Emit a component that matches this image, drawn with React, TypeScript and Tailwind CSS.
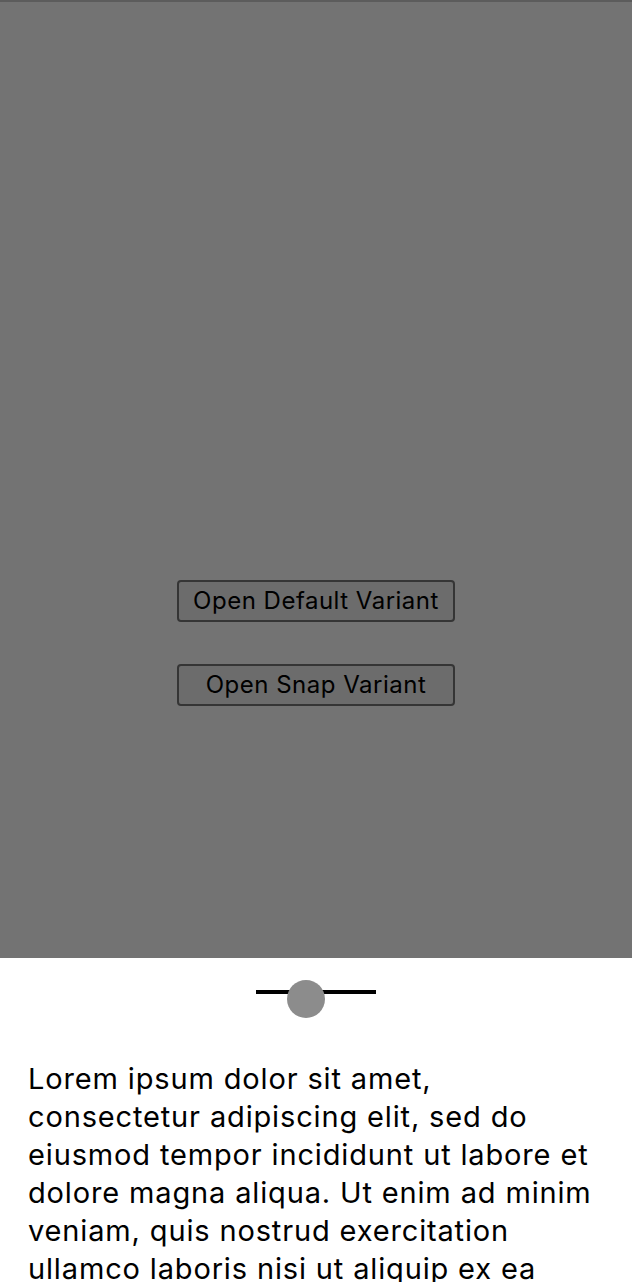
import React from "react";

const LINES = [
  "Lorem ipsum dolor sit amet,",
  "consectetur adipiscing elit, sed do",
  "eiusmod tempor incididunt ut labore et",
  "dolore magna aliqua. Ut enim ad minim",
  "veniam, quis nostrud exercitation",
  "ullamco laboris nisi ut aliquip ex ea",
  "commodo consequat. Duis aute irure",
  "dolor in reprehenderit in voluptate",
  "velit esse cillum dolore eu fugiat",
  "nulla pariatur.",
];

export default function App() {
  return (
    <div
      className="relative w-[632px] h-[1282px] overflow-hidden bg-white"
      style={{ fontFamily: 'Inter, "Liberation Sans", Arial, sans-serif' }}
    >
      <div className="flex h-full flex-col items-center justify-center gap-[42px] pt-[4px]">
        <button className="w-[278px] h-[42px] rounded-[4px] border-2 border-[#767676] bg-[#efefef] text-[24px] tracking-[0.5px] text-black">
          Open Default Variant
        </button>
        <button className="w-[278px] h-[42px] rounded-[4px] border-2 border-[#767676] bg-[#efefef] text-[24px] tracking-[0.5px] text-black">
          Open Snap Variant
        </button>
      </div>
      <div className="absolute inset-0 bg-[rgba(0,0,0,0.55)] border-t-2 border-[#5c5c5c]" />
      <div className="absolute left-0 right-0 top-[958px] bottom-0 flex flex-col bg-white">
        <div className="flex h-[68px] shrink-0 items-center justify-center">
          <div className="relative h-[4px] w-[120px] bg-black">
            <div className="absolute left-[31px] top-[-10px] h-[38px] w-[38px] rounded-full bg-[#8c8c8c]" />
          </div>
        </div>
        <p className="flex flex-col pl-[28px] pt-[34px] text-[29px] leading-[38px] tracking-[0.85px] text-black">
          {LINES.map((l) => (
            <span key={l} className="whitespace-nowrap">
              {l}
            </span>
          ))}
        </p>
      </div>
    </div>
  );
}
